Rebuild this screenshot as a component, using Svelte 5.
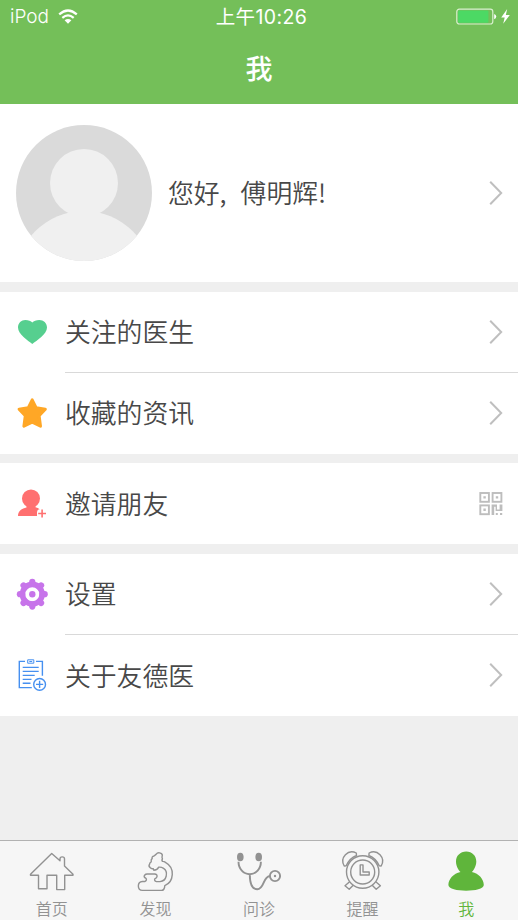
<script lang="ts">
  type Item = { icon: string; label: string; qr?: boolean };

  const groups: Item[][] = [
    [
      { icon: 'heart', label: '关注的医生' },
      { icon: 'star', label: '收藏的资讯' },
    ],
    [{ icon: 'invite', label: '邀请朋友', qr: true }],
    [
      { icon: 'gear', label: '设置' },
      { icon: 'about', label: '关于友德医' },
    ],
  ];

  const tabs = [
    { id: 'home', label: '首页' },
    { id: 'discover', label: '发现' },
    { id: 'consult', label: '问诊' },
    { id: 'remind', label: '提醒' },
    { id: 'me', label: '我' },
  ];

  let activeTab = $state('me');
</script>

{#snippet chevron()}
  <svg class="chevron" width="14" height="26" viewBox="0 0 14 26">
    <path d="M1.2 1.8 L12.2 13 L1.2 24.2" />
  </svg>
{/snippet}

{#snippet itemIcon(name: string)}
  <svg class="item-icon" width="32" height="32" viewBox="0 0 32 32">
    {#if name === 'heart'}
      <path fill="#56cf8f" d="M16.3 28 C12 24.5 2 18.5 2 11.5 C2 7 5.3 4 9.3 4 C12.4 4 15 5 16.3 6.6 C17.7 5 20.2 4 23.3 4 C27.6 4 31 7 31 11.5 C31 18.5 20.6 24.5 16.3 28 Z" />
    {:else if name === 'star'}
      <path fill="#ffa726" stroke="#ffa726" stroke-width="3" stroke-linejoin="round" d="M16.2 2.8 L20.2 10.8 L29.3 12.2 L23.1 18.8 L24.5 29.2 L16.2 25.2 L7.9 29.2 L9.3 18.8 L3.1 12.2 L12.2 10.8 Z" />
    {:else if name === 'invite'}
      <g fill="#ff7070">
        <ellipse cx="15" cy="10.6" rx="9" ry="9.2" />
        <path d="M2 28 C2 23 5.5 20.6 10.5 19.4 V17 H19.5 V19.3 Q22 19.8 23.7 21.2 Q21.3 21.2 21 24.5 V28 Z" />
        <path d="M25.3 21.5 H26.9 V24.7 H30 V26.3 H26.9 V29.4 H25.3 V26.3 H22.2 V24.7 H25.3 Z" />
      </g>
    {:else if name === 'gear'}
      <g fill="none" stroke="#c774ea">
        <circle cx="16.3" cy="16.2" r="9.8" stroke-width="5.6" />
        <g stroke-width="6.2" stroke-linecap="round">
          {#each [0, 45, 90, 135, 180, 225, 270, 315] as angle}
            <path d="M16.3 3.8 V6" transform="rotate({angle} 16.3 16.2)" />
          {/each}
        </g>
      </g>
      <circle cx="16.3" cy="16.2" r="3.2" fill="#c774ea" />
    {:else}
      <g fill="none" stroke="#4690f0" stroke-width="1.4" transform="translate(0 .8)">
        <path d="M9 1.6 H3.3 V27.8 H15.8 M20 1.6 H26.4 V16" />
        <path d="M11.7 0 H17.8 V3.4 H11.7 Z M13.3 1.7 H16.2" stroke-width="1" />
        <path d="M6.7 7.6 H22.7 M6.7 11.6 H22.7 M6.7 15.6 H18.7 M6.7 19.6 H15.5 M6.7 23.5 H14.5" />
        <circle cx="23.6" cy="24.6" r="5.9" />
        <path d="M23.6 21 V28.2 M20 24.6 H27.2" />
      </g>
    {/if}
  </svg>
{/snippet}

{#snippet tabIcon(name: string)}
  <svg class="tab-icon" width="48" height="44" viewBox="0 0 48 44">
    {#if name === 'home'}
      <path d="M23.7 5.5 L32 12.8 V10.8 Q32 8.9 34.2 8.9 Q36.5 8.9 36.5 10.8 V18 L45 26.2 V27.3 H36.7 V41.6 H28.7 V27.3 H19 V40.8 H10.5 V27.3 H2.5 V26.2 Z" />
    {:else if name === 'discover'}
      <path d="M25 6.4 Q26.5 4.4 28.6 4.9 Q31.6 5.6 31.3 7.5 Q30.6 9.2 31.4 10.8 Q30.4 12.6 31.7 13.4 Q33.2 13.4 34.8 14.6 C44.2 19.8 43 33.8 33.8 37.6 Q33.6 42.4 30.5 42.4 H11.4 C6 42.4 6 33.7 11.4 33.5 H14 Q16.2 32 15 30.4 Q12.2 29 13.6 27.2 Q14.6 26 16.2 26 H23.6 Q26.4 26.2 26 28.8 Q25.4 30.2 23.8 30.8 Q23 33.2 25.4 33.6 H29 C36 33 37.4 23.6 32.6 20.4 Q30.2 18.8 27.6 19.2 Q26.4 22 22.8 22.2 L22.2 20.6 Q20.2 21 19.2 19.6 Q17.2 18.2 18.6 16.2 Q18.6 14.4 20.2 13.8 Q19.8 11.6 21.2 10.4 Q20.6 8.4 23 8 Z" />
    {:else if name === 'consult'}
      <g class="solid">
        <ellipse cx="5.3" cy="9" rx="3.3" ry="4.3" />
        <ellipse cx="23.7" cy="9" rx="3.3" ry="4.3" />
        <circle cx="40" cy="28" r="1.2" />
      </g>
      <path class="tube" d="M3.5 13.7 C3.6 21 8.5 26.2 14.8 26.2 C21 26.2 25.8 21 25.9 13.7 M14.8 26.2 C14.8 36 17.5 41.2 22.3 41.2 C29.5 41.2 27.5 29 34.8 28" />
      <circle class="tube" cx="40" cy="28" r="5.1" />
    {:else if name === 'remind'}
      <circle cx="23.7" cy="24" r="16.2" />
      <circle cx="23.7" cy="24" r="12" />
      <path d="M7.2 17.8 L5.2 18 C0.4 9.5 9.2 0.6 17.3 5 L17.5 7.5 Q10.6 10.2 7.2 17.8 Z" />
      <path d="M40.2 17.8 L42.2 18 C47 9.5 38.2 0.6 30.1 5 L29.9 7.5 Q36.8 10.2 40.2 17.8 Z" />
      <path d="M10.6 33.7 L6 37.7 L10.2 41.2 L14.2 37.2 M36.8 33.7 L41.4 37.7 L37.2 41.2 L33.2 37.2" />
      <path d="M21.2 16.9 H24 V24 H30.2 V27 H21.2 Z" />
    {:else}
      <path class="solid" d="M24.2 3.6 C30.2 3.6 34.3 8 34.3 13.5 C34.3 18 31.8 22 29.9 24 C36.8 25.3 41.8 31.2 41.8 37 C41.8 44.6 6.4 44.6 6.4 37 C6.4 31.2 11.5 25.3 18.5 24 C16.4 22 14 18 14 13.5 C14 8 18.2 3.6 24.2 3.6 Z" />
    {/if}
  </svg>
{/snippet}

<div class="screen">
  <header>
    <div class="status-bar">
      <div class="carrier">
        <span>iPod</span>
        <svg width="20" height="16" viewBox="0 0 20 16">
          <path d="M1.2 5.4 Q10 -2.4 18.8 5.4 M4.3 8.9 Q10 4 15.7 8.9" fill="none" stroke="#fff" stroke-width="2.2" />
          <path d="M6.6 11.3 Q10 8.6 13.4 11.3 L10 14.8 Z" fill="#fff" />
        </svg>
      </div>
      <span class="time">上午10:26</span>
      <div class="power">
        <svg width="56" height="18" viewBox="0 0 56 18">
          <rect x=".8" y="1.2" width="36" height="14.8" rx="2.5" fill="none" stroke="#d9efcf" stroke-width="1.2" />
          <rect x="2.2" y="2.5" width="30.2" height="12.2" rx="1" fill="#4cd964" />
          <path d="M38.2 6 Q40.2 6.5 40.2 8.6 Q40.2 10.7 38.2 11.2 Z" fill="#fff" />
          <path d="M51.2 1 L45.2 9.6 H48.7 L47.2 15.8 L53.8 7 H49.8 Z" fill="#fff" />
        </svg>
      </div>
    </div>
    <h1>我</h1>
  </header>

  <section class="profile">
    <svg class="avatar" width="136" height="136" viewBox="0 0 136 136">
      <defs>
        <clipPath id="avatar-clip"><circle cx="68" cy="68" r="68" /></clipPath>
      </defs>
      <g clip-path="url(#avatar-clip)">
        <rect width="136" height="136" fill="#dadada" />
        <circle cx="68" cy="58" r="34" fill="#f0f0f0" />
        <circle cx="68" cy="155" r="69" fill="#f0f0f0" />
      </g>
    </svg>
    <p class="greeting">您好<span class="comma">,</span>傅明辉!</p>
    {@render chevron()}
  </section>

  {#each groups as group}
    <ul class="group">
      {#each group as item}
        <li>
          {@render itemIcon(item.icon)}
          <div class="item-body">
            <span>{item.label}</span>
            {#if item.qr}
              <svg class="qr" width="24" height="24" viewBox="0 0 24 24">
                <g fill="none" stroke="#bdbdbd" stroke-width="1.9">
                  <rect x="1.3" y="1" width="8.6" height="8.8" />
                  <rect x="13.6" y="1" width="8.8" height="8.8" />
                  <rect x="1.3" y="13.4" width="8.6" height="8.8" />
                </g>
                <path fill="#bdbdbd" d="M4.4 4.2 h2.4 v2.4 h-2.4 z M16.8 4.2 h2.4 v2.4 h-2.4 z M4.4 16.6 h2.4 v2.4 h-2.4 z M12.6 12.5 h5.4 v5 h2.6 v-5 h2.8 v6.4 h-6.8 v-4.2 h-1.4 v8.4 h-2.6 z M16.8 21 h2 v2 h-2 z M21 21 h2.2 v2 h-2.2 z" />
              </svg>
            {:else}
              {@render chevron()}
            {/if}
          </div>
        </li>
      {/each}
    </ul>
  {/each}

  <nav>
    {#each tabs as tab}
      <button class:active={activeTab === tab.id} onclick={() => (activeTab = tab.id)}>
        {@render tabIcon(tab.id)}
        <span>{tab.label}</span>
      </button>
    {/each}
  </nav>
</div>

<style>
  :global(body) {
    margin: 0;
  }

  .screen {
    display: flex;
    flex-direction: column;
    height: 920px;
    background: #efefef;
    color: #484848;
    font-family: 'Noto Sans CJK SC', sans-serif;
    font-weight: 350;
    overflow: hidden;
  }

  header {
    flex: none;
    height: 104px;
    background: #74bf59;
    color: #fff;
  }

  .status-bar {
    display: grid;
    grid-template-columns: 1fr auto 1fr;
    align-items: center;
    height: 34px;
    padding: 0 6px 0 10px;
    font-family: Inter, 'Noto Sans CJK SC', sans-serif;
    font-size: 19px;
    line-height: 34px;
  }

  .carrier {
    display: flex;
    align-items: center;
    gap: 9px;
  }

  .time {
    padding-left: 1px;
    font-weight: 400;
    font-size: 19.5px;
    letter-spacing: 0.4px;
  }

  .power {
    display: flex;
    justify-content: flex-end;
  }

  h1 {
    margin: 0;
    font-size: 27px;
    font-weight: 500;
    line-height: 67px;
    text-align: center;
  }

  .profile {
    flex: none;
    display: flex;
    align-items: center;
    height: 178px;
    padding: 0 15px 0 16px;
    box-sizing: border-box;
    background: #fff;
  }

  .greeting {
    flex: 1;
    margin: 0 0 2px 16px;
    font-size: 25.8px;
    line-height: 40px;
  }

  .comma {
    display: inline-block;
    width: 21px;
  }

  .chevron {
    flex: none;
    fill: none;
    stroke: #bfbfbf;
    stroke-width: 2;
  }

  .group {
    flex: none;
    margin: 9.6px 0 0;
    padding: 0;
    list-style: none;
    background: #fff;
  }

  li {
    display: flex;
    align-items: center;
    height: 81px;
    padding-left: 16px;
  }

  .item-icon {
    flex: none;
    overflow: visible;
  }

  .item-body {
    flex: 1;
    display: flex;
    align-items: center;
    justify-content: space-between;
    height: 100%;
    margin-left: 17px;
    padding-right: 15px;
    box-sizing: border-box;
    font-size: 25.8px;
    line-height: 40px;
  }

  .item-body span {
    padding-bottom: 1.5px;
  }

  li:not(:last-child) .item-body {
    border-bottom: 1px solid #d9d9d9;
  }

  nav {
    display: flex;
    height: 80px;
    margin-top: auto;
    box-sizing: border-box;
    border-top: 1px solid #b2b2b2;
    background: #f6f6f6;
  }

  button {
    flex: 1;
    display: flex;
    flex-direction: column;
    align-items: center;
    gap: 4px;
    padding: 7px 0 0;
    border: none;
    background: none;
    color: #929292;
    font: inherit;
    font-size: 16px;
    line-height: 24px;
    cursor: pointer;
  }

  button.active {
    color: #5fb53b;
  }

  .tab-icon {
    flex: none;
    fill: none;
    stroke: currentColor;
    stroke-width: 1.4;
    stroke-linejoin: round;
  }

  .solid {
    fill: currentColor;
    stroke: none;
  }

  .tube {
    stroke-width: 1.9;
  }
</style>
